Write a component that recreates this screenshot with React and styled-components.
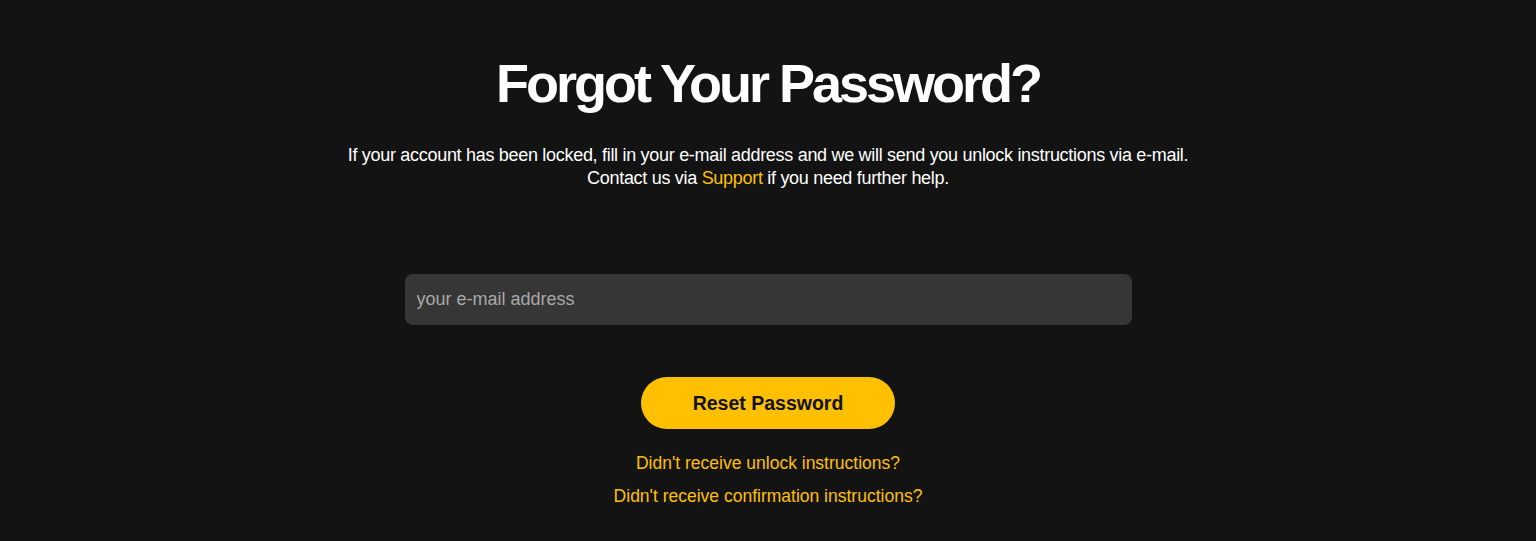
import styled, { createGlobalStyle } from 'styled-components'

const GlobalStyle = createGlobalStyle`
  html, body {
    margin: 0;
    padding: 0;
    background: #131313;
  }
  body {
    font-family: "Liberation Sans", Arial, sans-serif;
    color: #ffffff;
  }
`

const Page = styled.main`
  min-height: 541px;
  display: flex;
  flex-direction: column;
  align-items: center;
  padding-top: 51px;
  box-sizing: border-box;
`

const Title = styled.h1`
  margin: 0;
  font-size: 54px;
  font-weight: 700;
  letter-spacing: -3px;
  line-height: 64px;
  color: #ffffff;
`

const Intro = styled.p`
  margin: 29px 0 0;
  font-size: 18px;
  line-height: 23px;
  letter-spacing: -0.3px;
  text-align: center;
  color: #ffffff;
`

const Link = styled.a`
  color: #ffc000;
  text-decoration: none;
`

const Form = styled.form`
  width: 727px;
  margin-top: 84px;
  display: flex;
  flex-direction: column;
  align-items: center;
`

const EmailInput = styled.input`
  width: 100%;
  height: 51px;
  box-sizing: border-box;
  border: none;
  border-radius: 8px;
  background: #363636;
  padding: 0 12px;
  font-family: inherit;
  font-size: 18px;
  color: #ffffff;
  outline: none;

  &::placeholder {
    color: #a8a8a8;
  }
`

const SubmitButton = styled.button`
  margin-top: 52px;
  width: 254px;
  height: 52px;
  border: none;
  border-radius: 26px;
  background: #ffc000;
  color: #111111;
  font-family: inherit;
  font-size: 19.5px;
  font-weight: 700;
  cursor: pointer;
`

const Links = styled.div`
  margin-top: 23px;
  display: flex;
  flex-direction: column;
  align-items: center;
  gap: 11px;
`

const HelpLink = styled(Link)`
  font-size: 17.5px;
  line-height: 22px;
`

export default function App() {
  return (
    <>
      <GlobalStyle />
      <Page>
        <Title>Forgot Your Password?</Title>
        <Intro>
          If your account has been locked, fill in your e-mail address and we will send you unlock instructions via e-mail.
          <br />
          Contact us via <Link href="#">Support</Link> if you need further help.
        </Intro>
        <Form onSubmit={(e) => e.preventDefault()}>
          <EmailInput type="email" placeholder="your e-mail address" />
          <SubmitButton type="submit">Reset Password</SubmitButton>
          <Links>
            <HelpLink href="#">Didn't receive unlock instructions?</HelpLink>
            <HelpLink href="#">Didn't receive confirmation instructions?</HelpLink>
          </Links>
        </Form>
      </Page>
    </>
  )
}
